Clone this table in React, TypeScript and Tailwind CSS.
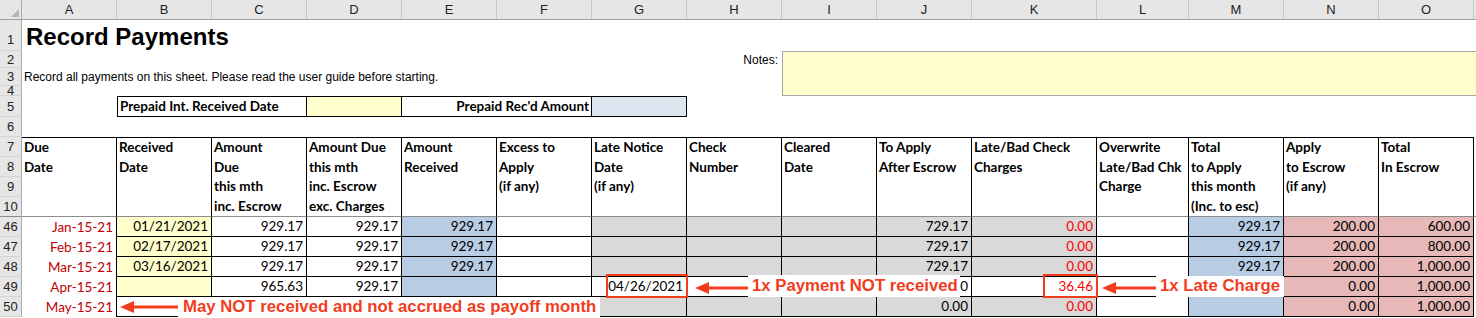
const COLS = ["A", "B", "C", "D", "E", "F", "G", "H", "I", "J", "K", "L", "M", "N", "O"];
const WIDTHS = [
  "w-[95px]", "w-[95px]", "w-[95px]", "w-[95px]", "w-[95px]", "w-[95px]", "w-[95px]", "w-[95px]",
  "w-[95px]", "w-[95px]", "w-[125px]", "w-[92px]", "w-[95px]", "w-[95px]", "w-[95px]",
];

const arial = "font-['Liberation_Sans',Arial,sans-serif]";
const body = "font-['Lato','Open_Sans',sans-serif]";

const WH = "bg-white";
const YL = "bg-[#ffffcc]";
const BL = "bg-[#b8cce4]";
const GR = "bg-[#d9d9d9]";
const PK = "bg-[#e6b8b7]";
const DUE = "text-[#c00000]";
const RED = "text-[#ff0000]";

type Cell = [string, string, string?];

const HEADERS: string[][] = [
  ["Due", "Date"],
  ["Received", "Date"],
  ["Amount", "Due", "this mth", "inc. Escrow"],
  ["Amount Due", "this mth", "inc. Escrow", "exc. Charges"],
  ["Amount", "Received"],
  ["Excess to", "Apply", "(if any)"],
  ["Late Notice", "Date", "(if any)"],
  ["Check", "Number"],
  ["Cleared", "Date"],
  ["To Apply", "After Escrow"],
  ["Late/Bad Check", "Charges"],
  ["Overwrite", "Late/Bad Chk", "Charge"],
  ["Total", "to Apply", "this month", "(Inc. to esc)"],
  ["Apply", "to Escrow", "(if any)"],
  ["Total", "In Escrow"],
];

const ROWS: { n: string; cells: Cell[] }[] = [
  {
    n: "46",
    cells: [
      ["Jan-15-21", WH, DUE], ["01/21/2021", YL], ["929.17", WH], ["929.17", WH], ["929.17", BL],
      ["", WH], ["", GR], ["", GR], ["", GR], ["729.17", GR], ["0.00", GR, RED], ["", WH],
      ["929.17", BL], ["200.00", PK], ["600.00", PK],
    ],
  },
  {
    n: "47",
    cells: [
      ["Feb-15-21", WH, DUE], ["02/17/2021", YL], ["929.17", WH], ["929.17", WH], ["929.17", BL],
      ["", WH], ["", GR], ["", GR], ["", GR], ["729.17", GR], ["0.00", GR, RED], ["", WH],
      ["929.17", BL], ["200.00", PK], ["800.00", PK],
    ],
  },
  {
    n: "48",
    cells: [
      ["Mar-15-21", WH, DUE], ["03/16/2021", YL], ["929.17", WH], ["929.17", WH], ["929.17", BL],
      ["", WH], ["", GR], ["", GR], ["", GR], ["729.17", GR], ["0.00", GR, RED], ["", WH],
      ["929.17", BL], ["200.00", PK], ["1,000.00", PK],
    ],
  },
  {
    n: "49",
    cells: [
      ["Apr-15-21", WH, DUE], ["", YL], ["965.63", WH], ["929.17", WH], ["", BL],
      ["", WH], ["04/26/2021", WH], ["", WH], ["", WH], ["0.00", WH], ["36.46", WH, RED], ["", WH],
      ["", WH], ["0.00", PK], ["1,000.00", PK],
    ],
  },
  {
    n: "50",
    cells: [
      ["May-15-21", WH, DUE], ["", WH], ["", WH], ["", WH], ["", BL],
      ["", WH], ["", GR], ["", GR], ["", GR], ["0.00", GR], ["0.00", GR, RED], ["", WH],
      ["", BL], ["0.00", PK], ["1,000.00", PK],
    ],
  },
];

function RowNum({ n, h, last }: { n: string; h: string; last?: boolean }) {
  return (
    <div
      className={`${h} w-[22px] shrink-0 overflow-hidden flex items-center justify-center bg-[#e6e6e6] border-r border-b border-r-[#ababab] ${
        last ? "border-b-[#8c8c8c]" : "border-b-[#d4d4d4]"
      } text-[13px] leading-none text-[#222] ${arial}`}
    >
      {n}
    </div>
  );
}

function ColumnLetters() {
  return (
    <div className={`flex h-[20px] bg-[#e6e6e6] border-b border-[#9e9e9e] text-[13px] text-[#222] ${arial}`}>
      <div className="w-[22px] shrink-0 border-r border-[#ababab] relative">
        <svg className="absolute left-[11px] top-[9px]" width="8" height="8" viewBox="0 0 8 8">
          <polygon points="8,0 8,8 0,8" fill="#b5b5b5" />
        </svg>
      </div>
      {COLS.map((c, i) => (
        <div key={c} className={`${WIDTHS[i]} shrink-0 border-r border-[#c6c6c6] flex items-center justify-center`}>
          {c}
        </div>
      ))}
      <div className="flex-1" />
    </div>
  );
}

function DataRow({ n, cells }: { n: string; cells: Cell[] }) {
  return (
    <div className={`flex h-[20px] text-[13.5px] ${body}`}>
      <RowNum n={n} h="h-[20px]" />
      {cells.map(([v, bg, color], i) => (
        <div
          key={i}
          className={`${WIDTHS[i]} ${bg} ${color ?? "text-black"} shrink-0 border-r border-black ${
            i === 0 ? "" : "border-b"
          } flex items-center justify-end pr-[3px] whitespace-nowrap`}
        >
          {v}
        </div>
      ))}
      <div className="flex-1 bg-white" />
    </div>
  );
}

export default function App() {
  return (
    <div className="relative w-[1476px] h-[318px] overflow-hidden bg-white text-black">
      <ColumnLetters />

      {/* row 1: sheet title */}
      <div className="flex h-[31px]">
        <div className={`h-[31px] w-[22px] shrink-0 flex justify-center pt-[13px] bg-[#e6e6e6] border-r border-b border-r-[#ababab] border-b-[#d4d4d4] text-[13px] leading-none text-[#222] ${arial}`}>
          1
        </div>
        <div className={`flex-1 pl-[4px] pt-[5px] text-[24px] font-bold leading-[24px] ${arial}`}>Record Payments</div>
      </div>

      {/* rows 2-4: intro text and notes box */}
      <div className="flex">
        <div className="flex flex-col">
          <RowNum n="2" h="h-[17px]" />
          <RowNum n="3" h="h-[18px]" />
          <div className={`h-[10px] w-[22px] overflow-hidden flex justify-center bg-[#e6e6e6] border-r border-b border-r-[#ababab] border-b-[#d4d4d4] text-[13px] leading-[13px] text-[#222] ${arial}`}>
            <span className="-mt-[2px]">4</span>
          </div>
        </div>
        <div className={`w-[760px] shrink-0 flex flex-col text-[12px] ${arial}`}>
          <div className="h-[17px] flex items-center justify-end pr-[4px]">Notes:</div>
          <div className="h-[18px] flex items-center pl-[2px] whitespace-nowrap">
            Record all payments on this sheet. Please read the user guide before starting.
          </div>
          <div className="h-[10px]" />
        </div>
        <div className="flex-1 bg-[#ffffcc] border border-r-0 border-[#a6a6a6]" />
      </div>

      {/* row 5: prepaid interest */}
      <div className={`flex h-[21px] text-[13.5px] ${body}`}>
        <RowNum n="5" h="h-[21px]" />
        <div className="w-[95px] shrink-0" />
        <div className="w-[190px] shrink-0 border border-black font-bold flex items-center pl-[2px]">
          Prepaid Int. Received Date
        </div>
        <div className="w-[95px] shrink-0 bg-[#ffffcc] border-y border-r border-black" />
        <div className="w-[190px] shrink-0 border-y border-r border-black font-bold flex items-center justify-end pr-[2px]">
          Prepaid Rec'd Amount
        </div>
        <div className="w-[95px] shrink-0 bg-[#dce6f1] border-y border-r border-black" />
        <div className="flex-1" />
      </div>

      {/* row 6 */}
      <div className="flex h-[20px]">
        <RowNum n="6" h="h-[20px]" />
        <div className="flex-1" />
      </div>

      {/* rows 7-10: column headings */}
      <div className={`flex text-[13.5px] font-bold ${body}`}>
        <div className="flex flex-col font-normal">
          <RowNum n="7" h="h-[20px]" />
          <RowNum n="8" h="h-[20px]" />
          <RowNum n="9" h="h-[20px]" />
          <RowNum n="10" h="h-[20px]" last />
        </div>
        {HEADERS.map((lines, i) => (
          <div
            key={i}
            className={`${WIDTHS[i]} h-[80px] shrink-0 border-t border-r border-b border-black border-b-[#8c8c8c] pl-[2px] flex flex-col`}
          >
            {lines.map((l) => (
              <div key={l} className="h-[19.5px] leading-[19.5px] whitespace-nowrap">
                {l}
              </div>
            ))}
          </div>
        ))}
        <div className="flex-1 border-b border-[#8c8c8c]" />
      </div>

      {ROWS.map((r) => (
        <DataRow key={r.n} n={r.n} cells={r.cells} />
      ))}

      {/* callouts */}
      <svg className="absolute inset-0 pointer-events-none" width="1476" height="318">
        {[
          [120, 178, 307],
          [695, 748, 288],
          [1102, 1156, 288],
        ].map(([tip, tail, y]) => (
          <g key={tip}>
            <line x1={tip + 10} y1={y} x2={tail} y2={y} stroke="#f23c1e" strokeWidth="3" />
            <polygon points={`${tip},${y} ${tip + 14},${y - 6} ${tip + 14},${y + 6}`} fill="#f23c1e" />
          </g>
        ))}
      </svg>

      <div className="absolute left-[606px] top-[274px] w-[82px] h-[24px] border-2 border-[#f23c1e]" />
      <div className="absolute left-[1043px] top-[274px] w-[55px] h-[24px] border-2 border-[#f23c1e]" />

      <div className={`absolute left-[178px] top-[297px] w-[422px] h-[21px] bg-white pl-[5px] flex items-center text-[16.75px] font-bold leading-none text-[#f23c1e] whitespace-nowrap ${arial}`}>
        May NOT received and not accrued as payoff month
      </div>
      <div className={`absolute left-[748px] top-[275px] w-[212px] h-[22px] bg-white pl-[4px] flex items-center text-[16.75px] font-bold leading-none text-[#f23c1e] whitespace-nowrap ${arial}`}>
        1x Payment NOT received
      </div>
      <div className={`absolute left-[1156px] top-[276px] w-[128px] h-[21px] bg-white pl-[4px] flex items-center text-[16.75px] font-bold leading-none text-[#f23c1e] whitespace-nowrap ${arial}`}>
        1x Late Charge
      </div>
    </div>
  );
}
